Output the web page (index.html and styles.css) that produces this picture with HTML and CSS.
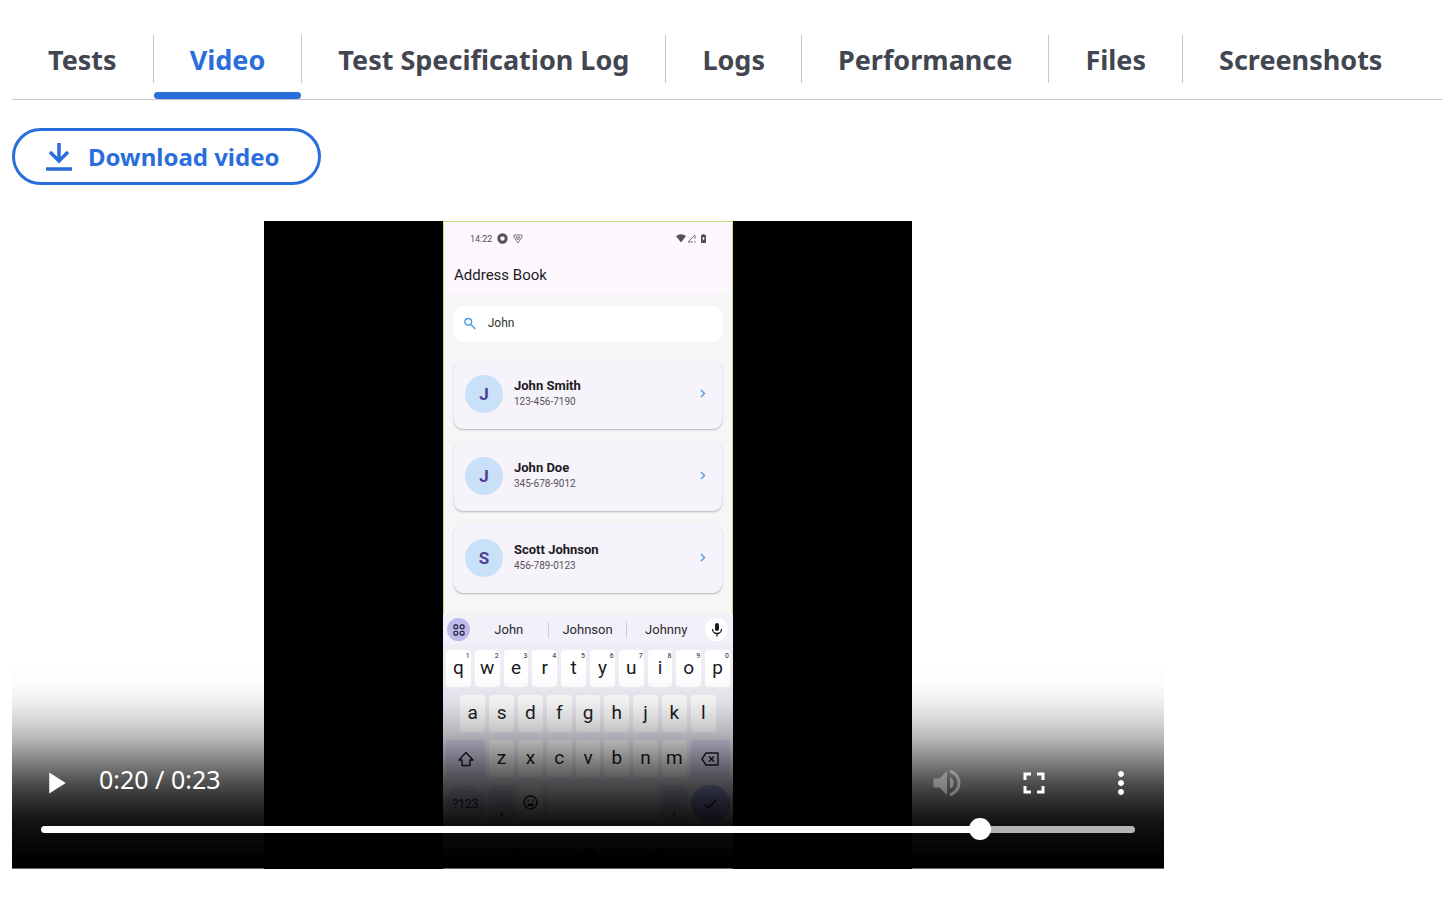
FILE: index.html
```html
<!DOCTYPE html>
<html lang="en">
<head>
    <meta charset="UTF-8">
    <meta name="viewport" content="width=device-width, initial-scale=1.0">
    <title>Video</title>
    <link rel="stylesheet" href="styles.css">
</head>
<body>

<!-- Result tabs -->
<nav class="tabs">
    <ul class="tabList">
        <li class="tab"><a href="#tests">Tests</a></li>
        <li class="tab active"><a href="#video" aria-current="page">Video</a></li>
        <li class="tab"><a href="#spec">Test Specification Log</a></li>
        <li class="tab"><a href="#logs">Logs</a></li>
        <li class="tab"><a href="#performance">Performance</a></li>
        <li class="tab"><a href="#files">Files</a></li>
        <li class="tab"><a href="#screenshots">Screenshots</a></li>
    </ul>
</nav>

<main class="content" id="video">
    <button type="button" class="downloadButton">
        <svg width="26" height="28" viewBox="0 0 26 28" fill="none" stroke="currentColor" stroke-width="3.500" aria-hidden="true">
            <path d="M13 0v18M4 9l9 9 9-9M0 26h26"/>
        </svg>
        Download video
    </button>

    <div class="player">
        <div class="frame">
            <!-- Recorded device screen -->
            <div class="phone">
                <div class="statusBar">
                    <span>14:22</span>
                    <svg width="11" height="11" viewBox="0 0 11 11" aria-hidden="true">
                        <circle cx="5.500" cy="5.500" r="3.700" fill="none" stroke="#555257" stroke-width="3"/>
                        <path d="M5 0l2 2-2 2zM5 11l-1-3 3 1z" fill="#555257"/>
                    </svg>
                    <svg width="10" height="10" viewBox="0 0 10 10" fill="none" stroke="#77747a" aria-hidden="true">
                        <path d="M1 1h8v2L5 9 1 3zM3 3h4L5 6z"/>
                    </svg>
                    <svg class="statusRight" width="31" height="9" viewBox="0 0 31 9" aria-hidden="true">
                        <path d="M0 2Q5-1.500 10 2L5 8.500z" fill="#555257"/>
                        <path d="M12 8l7-7M12 8h5M19 1v4M19 7v1.500" fill="none" stroke="#77747a"/>
                        <path d="M25 1h1.500V0h2v1H30v8h-5z" fill="#555257"/>
                        <path d="M27.500 3v3M26.300 4.500h2.400" stroke="#ddd"/>
                    </svg>
                </div>
                <div class="appTitle">Address Book</div>

                <div class="appBody">
                    <label class="search">
                        <svg width="13" height="13" viewBox="0 0 13 13" fill="none" stroke="#4c9be8" stroke-width="1.500" aria-hidden="true">
                            <circle cx="4.700" cy="4.700" r="3.700"/>
                            <path d="M7.500 7.500l5 5"/>
                        </svg>
                        <input type="text" value="John" aria-label="Search">
                    </label>

                    <div class="contact">
                        <span class="avatar">J</span>
                        <div class="contactText">
                            <div class="contactName">John Smith</div>
                            <div class="contactPhone">123-456-7190</div>
                        </div>
                        <svg class="chevron" width="6" height="9" viewBox="0 0 6 9" aria-hidden="true"><path d="M1 1l3.500 3.500L1 8"/></svg>
                    </div>
                    <div class="contact">
                        <span class="avatar">J</span>
                        <div class="contactText">
                            <div class="contactName">John Doe</div>
                            <div class="contactPhone">345-678-9012</div>
                        </div>
                        <svg class="chevron" width="6" height="9" viewBox="0 0 6 9" aria-hidden="true"><path d="M1 1l3.500 3.500L1 8"/></svg>
                    </div>
                    <div class="contact">
                        <span class="avatar">S</span>
                        <div class="contactText">
                            <div class="contactName">Scott Johnson</div>
                            <div class="contactPhone">456-789-0123</div>
                        </div>
                        <svg class="chevron" width="6" height="9" viewBox="0 0 6 9" aria-hidden="true"><path d="M1 1l3.500 3.500L1 8"/></svg>
                    </div>
                </div>

                <div class="suggestions">
                    <button type="button" class="round toolsButton" aria-label="Tools">
                        <svg width="12" height="12" viewBox="0 0 12 12" fill="none" stroke="#2d2b4d" stroke-width="1.300" aria-hidden="true">
                            <rect x="1" y="1" width="3.700" height="3.700" rx="1"/>
                            <rect x="7.300" y="1" width="3.700" height="3.700" rx="1"/>
                            <rect x="1" y="7.300" width="3.700" height="3.700" rx="1"/>
                            <rect x="7.300" y="7.300" width="3.700" height="3.700" rx="1"/>
                        </svg>
                    </button>
                    <button type="button" class="word">John</button>
                    <button type="button" class="word">Johnson</button>
                    <button type="button" class="word">Johnny</button>
                    <button type="button" class="round micButton" aria-label="Voice input">
                        <svg width="12" height="14" viewBox="0 0 12 14" aria-hidden="true">
                            <rect x="4" y="0" width="4" height="8" rx="2" fill="#1c1b1f"/>
                            <path d="M1.500 6a4.500 4.500 0 0 0 9 0M6 10.500V13.500" fill="none" stroke="#1c1b1f" stroke-width="1.300"/>
                        </svg>
                    </button>
                </div>

                <div class="keyboard">
                    <button type="button" class="key">q<sup>1</sup></button>
                    <button type="button" class="key">w<sup>2</sup></button>
                    <button type="button" class="key">e<sup>3</sup></button>
                    <button type="button" class="key">r<sup>4</sup></button>
                    <button type="button" class="key">t<sup>5</sup></button>
                    <button type="button" class="key">y<sup>6</sup></button>
                    <button type="button" class="key">u<sup>7</sup></button>
                    <button type="button" class="key">i<sup>8</sup></button>
                    <button type="button" class="key">o<sup>9</sup></button>
                    <button type="button" class="key">p<sup>0</sup></button>

                    <button type="button" class="key rowStart">a</button>
                    <button type="button" class="key">s</button>
                    <button type="button" class="key">d</button>
                    <button type="button" class="key">f</button>
                    <button type="button" class="key">g</button>
                    <button type="button" class="key">h</button>
                    <button type="button" class="key">j</button>
                    <button type="button" class="key">k</button>
                    <button type="button" class="key">l</button>

                    <button type="button" class="key wide" aria-label="Shift">
                        <svg width="16" height="16" viewBox="0 0 16 16" fill="none" stroke="#1c1b1f" stroke-width="1.400" stroke-linejoin="round" aria-hidden="true">
                            <path d="M8 1.500L15 9h-3v5.500H4V9H1z"/>
                        </svg>
                    </button>
                    <button type="button" class="key">z</button>
                    <button type="button" class="key">x</button>
                    <button type="button" class="key">c</button>
                    <button type="button" class="key">v</button>
                    <button type="button" class="key">b</button>
                    <button type="button" class="key">n</button>
                    <button type="button" class="key">m</button>
                    <button type="button" class="key wide" aria-label="Delete">
                        <svg width="18" height="14" viewBox="0 0 18 14" fill="none" stroke="#1c1b1f" stroke-width="1.400" stroke-linejoin="round" aria-hidden="true">
                            <path d="M5 1H17v12H5L1 7zM8 4.500l5 5M13 4.500l-5 5"/>
                        </svg>
                    </button>

                    <button type="button" class="key wide pill symbols">?123</button>
                    <button type="button" class="key tinted mark">,</button>
                    <button type="button" class="key" aria-label="Emoji">
                        <svg width="15" height="15" viewBox="0 0 15 15" fill="none" stroke="#1c1b1f" stroke-width="1.400" aria-hidden="true">
                            <circle cx="7.500" cy="7.500" r="6.500"/>
                            <path d="M4 8.500h7a3.500 3 0 0 1-7 0z" fill="#1c1b1f" stroke="none"/>
                            <path d="M5.200 4.500v2M9.800 4.500v2"/>
                        </svg>
                    </button>
                    <button type="button" class="key space" aria-label="Space"></button>
                    <button type="button" class="key tinted mark">.</button>
                    <button type="button" class="key wide pill enter" aria-label="Enter">
                        <svg width="13" height="10" viewBox="0 0 13 10" fill="none" stroke="#1c1b1f" stroke-width="1.400" aria-hidden="true"><path d="M1 5.500L4.500 9 12 1"/></svg>
                    </button>
                </div>

                <div class="navBar">
                    <svg width="12" height="10" viewBox="0 0 12 10" aria-hidden="true"><path d="M0 0h12L6 10z"/></svg>
                    <svg width="12" height="12" viewBox="0 0 12 12" aria-hidden="true"><circle cx="6" cy="6" r="6"/></svg>
                    <svg width="10" height="10" viewBox="0 0 10 10" aria-hidden="true"><rect width="10" height="10"/></svg>
                </div>
            </div>
        </div>

        <!-- Player controls over the picture -->
        <div class="controls">
            <div class="controlRow">
                <button type="button" class="control" aria-label="Play">
                    <svg width="36" height="36" viewBox="0 0 24 24" fill="#fff"><path d="M7.500 5v14l11-7z"/></svg>
                </button>
                <span class="time">0:20 / 0:23</span>
                <button type="button" class="control" aria-label="Mute" disabled>
                    <svg width="36" height="36" viewBox="0 0 24 24" fill="#fff"><path d="M3 9v6h4l5 5V4L7 9H3zm13.500 3c0-1.770-1.020-3.290-2.500-4.030v8.050c1.480-.73 2.500-2.250 2.500-4.020zM14 3.230v2.060c2.890.86 5 3.540 5 6.710s-2.110 5.850-5 6.710v2.060c4.010-.91 7-4.490 7-8.770s-2.990-7.860-7-8.770z"/></svg>
                </button>
                <button type="button" class="control" aria-label="Full screen">
                    <svg width="36" height="36" viewBox="0 0 24 24" fill="#fff"><path d="M7 14H5v5h5v-2H7v-3zm-2-4h2V7h3V5H5v5zm12 7h-3v2h5v-5h-2v3zM14 5v2h3v3h2V5h-5z"/></svg>
                </button>
                <button type="button" class="control" aria-label="More options">
                    <svg width="36" height="36" viewBox="0 0 24 24" fill="#fff"><path d="M12 8c1.100 0 2-.9 2-2s-.9-2-2-2-2 .9-2 2 .9 2 2 2zm0 2c-1.100 0-2 .9-2 2s.9 2 2 2 2-.9 2-2-.9-2-2-2zm0 6c-1.100 0-2 .9-2 2s.9 2 2 2 2-.9 2-2-.9-2-2-2z"/></svg>
                </button>
            </div>
            <input type="range" class="timeline" min="0" max="23" step="0.1" value="19.9" aria-label="Position" style="--played: 86%">
        </div>
    </div>
</main>

</body>
</html>
```

FILE: styles.css
```css
* {
    box-sizing: border-box;
}

body {
    margin: 0;
    padding-left: 12px;
    background-color: #fff;
    font-family: "Noto Sans", "Open Sans", sans-serif;
}

button {
    border: none;
    padding: 0;
    background: none;
    font-family: inherit;
    cursor: pointer;
}

/* Tabs */
.tabs {
    padding-top: 35px;
    border-bottom: 1px solid #c6c6cd;
}

.tabList {
    display: flex;
    margin: 0;
    padding: 0;
    list-style: none;
}

.tab {
    position: relative;
    padding-bottom: 16px;
}

.tab a {
    display: block;
    height: 48px;
    padding: 0 36px;
    border-right: 1px solid #c6c6cd;
    color: #424650;
    font-size: 27px;
    font-weight: 700;
    line-height: 50px;
    text-decoration: none;
    white-space: nowrap;
}

.tab:last-child a {
    border-right: none;
}

.tab.active a {
    color: #2a6edb;
}

.tab.active::after {
    content: "";
    position: absolute;
    left: 0;
    right: 1px;
    bottom: 0;
    height: 7px;
    border-radius: 4px;
    background-color: #2a6edb;
}

/* Download */
.content {
    display: flex;
    flex-direction: column;
    align-items: flex-start;
    gap: 36px;
    padding-top: 28px;
}

.downloadButton {
    display: flex;
    align-items: center;
    gap: 16px;
    padding: 0 38px 0 31px;
    border: 3px solid #2a6edb;
    border-radius: 29px;
    color: #2a6edb;
    font-size: 24px;
    font-weight: 700;
    line-height: 51px;
}

/* Player */
.player {
    position: relative;
    width: 100%;
    max-width: 1152px;
}

.frame {
    display: flex;
    justify-content: center;
    max-width: 648px;
    margin: 0 auto;
    background-color: #000;
}

.phone {
    display: flex;
    flex-direction: column;
    width: 290px;
    background-color: #f6f6f7;
    color: #1c1b1f;
    font-family: Roboto, sans-serif;
}

.statusBar {
    display: flex;
    align-items: center;
    gap: 5px;
    height: 36px;
    padding: 0 25px 2px 26px;
    border: 1px solid #cbdc7c;
    border-bottom: none;
    background-color: #fdf8fd;
    color: #555257;
    font-size: 9px;
}

.statusRight {
    margin-left: auto;
}

.appTitle {
    height: 37px;
    padding-left: 10px;
    border: 1px solid #cbdc7c;
    border-width: 0 1px;
    background-color: #fdf8fd;
    font-size: 15px;
    line-height: 36px;
}

.appBody {
    display: flex;
    flex-direction: column;
    gap: 13px;
    padding: 12px 10px 21px;
    border: 1px solid #cbdc7c;
    border-width: 0 1px;
}

.search {
    display: flex;
    align-items: center;
    gap: 12px;
    height: 36px;
    margin-bottom: 5px;
    padding: 0 10px 2px;
    border-radius: 9px;
    background-color: #fff;
}

.search input {
    width: 100%;
    padding: 0;
    border: none;
    background: none;
    color: #333;
    font-family: inherit;
    font-size: 12px;
}

.contact {
    display: flex;
    align-items: center;
    gap: 11px;
    height: 69px;
    padding: 0 16px 2px 11px;
    border-radius: 9px;
    background-color: #f7f3fa;
    box-shadow: 0 1px 2px #b4b2b8;
}

.avatar {
    width: 38px;
    border-radius: 50%;
    background-color: #c8e1f9;
    color: #4f3d94;
    font-size: 17px;
    font-weight: 700;
    line-height: 38px;
    text-align: center;
}

.contactText {
    flex: 1;
}

.contactName {
    font-size: 13px;
    font-weight: 700;
    line-height: 16px;
}

.contactPhone {
    color: #55535a;
    font-size: 10px;
    line-height: 16px;
}

.chevron {
    fill: none;
    stroke: #4c9be8;
    stroke-width: 1.4px;
}

/* Phone keyboard */
.suggestions {
    display: flex;
    align-items: center;
    height: 31px;
    padding: 0 5px 0 4px;
    background-color: #f2f0f8;
}

.round {
    display: flex;
    align-items: center;
    justify-content: center;
    width: 23px;
    height: 23px;
    border-radius: 50%;
}

.toolsButton {
    background-color: #bdbbe9;
}

.micButton {
    background-color: #fff;
}

.word {
    flex: 1;
    color: #2b2a2f;
    font-size: 13px;
    line-height: 16px;
}

.word + .word {
    border-left: 1px solid #cfcdd6;
}

.keyboard {
    display: grid;
    grid-template-columns: repeat(20, 1fr);
    grid-auto-rows: 37px;
    gap: 8px 4px;
    padding: 5px 3px 0;
    background-color: #efecf6;
}

.key {
    position: relative;
    display: flex;
    align-items: center;
    justify-content: center;
    grid-column: span 2;
    min-width: 0;
    padding-bottom: 2px;
    border-radius: 4px;
    background-color: #fff;
    color: #1c1b1f;
    font-size: 19px;
}

.key sup {
    position: absolute;
    top: 2px;
    right: 1px;
    font-size: 7px;
    line-height: 8px;
}

.rowStart {
    grid-column: 2 / span 2;
}

.wide {
    grid-column: span 3;
    padding-bottom: 0;
    background-color: #dbd9f3;
}

.tinted {
    background-color: #dbd9f3;
}

.mark {
    align-items: flex-end;
}

.space {
    grid-column: span 8;
}

.pill {
    border-radius: 19px;
}

.symbols {
    font-size: 12px;
}

.enter {
    background-color: #a9adf0;
}

.navBar {
    display: flex;
    align-items: center;
    justify-content: center;
    gap: 60px;
    height: 47px;
    padding-top: 16px;
    background-color: #efecf6;
}

/* Controls */
.controls {
    position: absolute;
    left: 0;
    right: 0;
    bottom: 0;
    display: flex;
    flex-direction: column;
    justify-content: flex-end;
    height: 204px;
    padding-bottom: 29px;
    background: linear-gradient(
        rgba(0, 0, 0, 0) 0,
        rgba(0, 0, 0, 0.01) 16px,
        rgba(0, 0, 0, 0.06) 36px,
        rgba(0, 0, 0, 0.16) 56px,
        rgba(0, 0, 0, 0.3) 76px,
        rgba(0, 0, 0, 0.49) 96px,
        rgba(0, 0, 0, 0.68) 116px,
        rgba(0, 0, 0, 0.82) 136px,
        rgba(0, 0, 0, 0.92) 156px,
        rgba(0, 0, 0, 0.97) 176px,
        #000 196px,
        #000 203px,
        rgba(0, 0, 0, 0.6) 203px
    );
}

.controlRow {
    display: flex;
    align-items: center;
    height: 70px;
}

.control {
    display: flex;
    align-items: center;
    justify-content: center;
    width: 87px;
    height: 70px;
}

.control:disabled {
    opacity: 0.3;
}

.time {
    flex: 1;
    padding-bottom: 8px;
    color: #fff;
    font-size: 25px;
}

.timeline {
    height: 22px;
    margin: 0 29px;
    background: none;
    appearance: none;
}

.timeline::-webkit-slider-runnable-track {
    height: 7px;
    border-radius: 4px;
    background: linear-gradient(to right, #fff var(--played), #b3b3b3 var(--played));
}

.timeline::-webkit-slider-thumb {
    width: 22px;
    height: 22px;
    margin-top: -8px;
    border-radius: 50%;
    background-color: #fff;
    appearance: none;
}
```
